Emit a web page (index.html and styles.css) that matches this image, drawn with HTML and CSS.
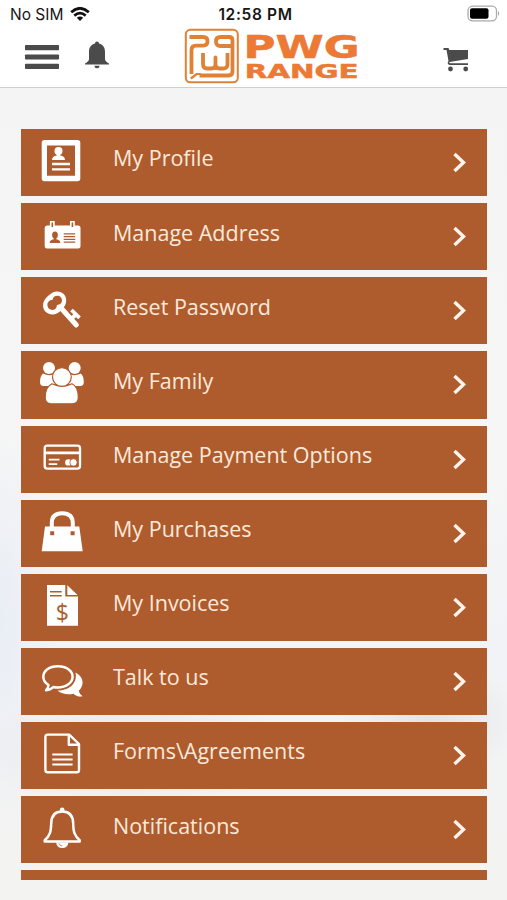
FILE: index.html
```html
<!DOCTYPE html>
<html lang="en">
<head>
<meta charset="utf-8">
<title>PWG Range</title>
<link rel="stylesheet" href="styles.css">
</head>
<body>
<header class="header">
  <div class="status">
    <div class="carrier"><span>No SIM</span>
      <svg width="20" height="14" viewBox="0 0 20 14" fill="none" stroke="#111" stroke-width="2.7"><path d="M1.2 5.3Q10-2.7 18.8 5.3M4.3 8.6Q10 3.8 15.7 8.6"/><path d="M6.8 10.8Q10 8.1 13.2 10.8L10 14Z" fill="#111" stroke="none"/></svg>
    </div>
    <div class="clock">12:58 PM</div>
    <svg class="battery" width="34" height="18" viewBox="0 0 34 18"><rect x="1" y="1.2" width="28.5" height="14.6" rx="4.5" fill="none" stroke="#aaa" stroke-width="1.3"/><rect x="3" y="3.3" width="18.5" height="10.4" rx="2" fill="#000"/><path d="M31 6q2.5 2.5 0 5z" fill="#aaa"/></svg>
  </div>
  <div class="toolbar">
    <div class="tools">
      <svg width="36" height="28" viewBox="0 0 36 28" fill="#4b4b4b"><rect x="1" y="1" width="34" height="5.2" rx=".8"/><rect x="1" y="10.5" width="34" height="5" rx=".8"/><rect x="1" y="19.8" width="34" height="5.2" rx=".8"/></svg>
      <svg width="26" height="28" viewBox="0 0 26 28" fill="#4b4b4b"><path d="M13 .5a2 2 0 0 1 2 2C19.500 3.700 21 7 21 11v7q0 2.300 4 4.500v1H1v-1Q5 20.300 5 18v-7C5 7 6.500 3.700 11 2.500a2 2 0 0 1 2-2z"/><path d="M10.500 24.800h5a2.500 2.500 0 0 1-5 0z"/></svg>
    </div>
    <svg class="logo" width="176" height="57" viewBox="184 28 176 57">
      <g fill="none" stroke="#df8238" stroke-linejoin="round">
        <rect x="185.800" y="29.800" width="52" height="52.500" rx="4.500" stroke-width="2"/>
        <path stroke-width="3.800" d="M189.500 37h13.500q4.500 0 4.500 4.300t-4.500 4.300h-7q-4.500 0-4.500 4.500V74M232.500 46h-12q-4.500 0-4.500-4.500t4.500-4.500h8.500q3.500 0 3.500 3.500v31q0 4-4 4h-29"/>
        <path stroke-width="3.800" d="M203 53v11q0 4.500 4 4.500h4.500q4 0 4-4v-7v7q0 4 4 4h3.500q4.500 0 4.500-4.500v-11"/>
        <path stroke-width="2.200" d="M190.800 78.500l6-4.500h4"/>
      </g>
      <g class="wordmark"><text class="word-top" x="243.500" y="57.600" textLength="116" lengthAdjust="spacingAndGlyphs">PWG</text><text class="word-bottom" x="244.700" y="77.600" textLength="114" lengthAdjust="spacingAndGlyphs">RANGE</text></g>
    </svg>
    <svg class="cart" width="28" height="26" viewBox="443 47 28 26"><path fill="#4b4b4b" d="M443.500 48h5l.8 2H468v9l-18.500 3q-.8 1 .5 1.300h18v1.700h-18.500q-3-1.200-1-4l-2-11h-3z"/><circle cx="450.500" cy="69" r="2.400" fill="#4b4b4b"/><circle cx="465.700" cy="69" r="2.400" fill="#4b4b4b"/></svg>
  </div>
</header>
<main class="menu">
  <a class="row"><svg class="icon" viewBox="38 0 48 67"><path fill-rule="evenodd" d="M44.500 11h33q2.800 0 2.800 2.800v35.700q0 2.800-2.800 2.800h-33q-2.800 0-2.800-2.800V13.800q0-2.800 2.800-2.800zM47 16.400v30.300h28V16.400z"/><circle cx="58.500" cy="22" r="4"/><path d="M56.700 24h3.600v2.500q4.700.5 4.700 4.500H52q0-4 4.700-4.500zM52 33.800h18v2.400H52zM52 39.200h18v2.400H52z"/></svg><span class="label">My Profile</span><svg class="chevron" viewBox="0 0 16 22"><path d="M3.500 3l9 8.500-9 8.500"/></svg></a>
  <a class="row"><svg class="icon" viewBox="38 0 48 67"><rect x="44.700" y="22.500" width="35.800" height="23" rx="2.500"/><path fill="#ae5c2e" stroke="#fff" stroke-width="1.600" d="M50.700 18.800h3.200v6h-3.200zM70.800 18.800H74v6h-3.200z"/><g fill="#ae5c2e"><ellipse cx="55" cy="32" rx="2.900" ry="3.500"/><path d="M53.700 34h2.600v2.200q4 .5 4 3.800H49.700q0-3.300 4-3.800zM63.700 30.200h11.500v1.200H63.700zM63.700 33h11.500v1.200H63.700zM63.700 35.800h11.500V37H63.700zM63.700 38.600h11.500v1.200H63.700z"/></g></svg><span class="label">Manage Address</span><svg class="chevron" viewBox="0 0 16 22"><path d="M3.500 3l9 8.500-9 8.500"/></svg></a>
  <a class="row"><svg class="icon" viewBox="38 0 48 67"><path fill-rule="evenodd" d="M57 14.500c6 0 9.500 4.300 9.200 9.500-.2 3.500-1.500 5.500-3.500 7.800-3 3.500-6 5.700-10 5.600-5.500 0-9.500-3.500-9.700-9 0-4 2-7 5-9.500s5.500-4.400 9-4.400zm.2 4.200c-2.500 0-4.200 1.600-4.600 4-3.200.4-5.400 2.300-5.200 5.500.2 2.800 2.500 4.800 5.200 4.700 2.700-.2 4.300-2 4.300-4.900 2.900.1 5-1.700 5.100-4.400.1-2.800-2-4.900-4.800-4.900z"/><path fill="none" stroke="#fff" stroke-width="5" stroke-linecap="round" d="M61 31l15.300 17"/><path fill="none" stroke="#fff" stroke-width="3.800" d="M70.500 42.500l5.500-5M71.500 33l8 7.800"/></svg><span class="label">Reset Password</span><svg class="chevron" viewBox="0 0 16 22"><path d="M3.500 3l9 8.500-9 8.500"/></svg></a>
  <a class="row"><svg class="icon" viewBox="38 0 48 67"><circle cx="49" cy="16.900" r="6"/><circle cx="74.700" cy="16.900" r="6"/><path d="M43 22.500q6 3 10 1 0 6 3.500 9l-5 2.500h-8q-3.500 0-3.500-4 0-6 3-8.500zM80.800 22.500q-6 3-10 1 0 6-3.500 9l5 2.500h8q3.500 0 3.500-4 0-6-3-8.500z"/><g stroke="#ae5c2e" stroke-width="1.200"><path d="M52 32.800q10 5 20 0 6.200 3 6.300 13.500 0 6.500-6 6.500H51.200q-6 0-6-6.500Q45.400 35.800 52 32.800z"/><circle cx="61.900" cy="26" r="9.400"/></g></svg><span class="label">My Family</span><svg class="chevron" viewBox="0 0 16 22"><path d="M3.500 3l9 8.500-9 8.500"/></svg></a>
  <a class="row"><svg class="icon" viewBox="38 0 48 67"><rect x="44.700" y="19.700" width="35.300" height="23" rx="2.600" fill="none" stroke="#fff" stroke-width="2.300"/><path d="M45 25.500h35v2.800H45zM48.700 32.700h10.800v1.800H48.700zM48.700 37.300h8.500v1.800h-8.500z"/><circle cx="68.300" cy="36.400" r="3.200"/><circle cx="73.500" cy="36.400" r="3.700" stroke="#ae5c2e" stroke-width=".8"/></svg><span class="label">Manage Payment Options</span><svg class="chevron" viewBox="0 0 16 22"><path d="M3.500 3l9 8.500-9 8.500"/></svg></a>
  <a class="row"><svg class="icon" viewBox="38 0 48 67"><path d="M45 26.500h34.300l3.400 24.700h-41z"/><path fill="none" stroke="#fff" stroke-width="4" d="M51.800 28v-5q0-9.800 10.400-9.800T72.800 23v5"/><path fill="#ae5c2e" d="M50.200 31.200h4v4h-4zM70.600 31.200h4v4h-4z"/></svg><span class="label">My Purchases</span><svg class="chevron" viewBox="0 0 16 22"><path d="M3.500 3l9 8.500-9 8.500"/></svg></a>
  <a class="row"><svg class="icon" viewBox="38 0 48 67"><path d="M47 11.100h18.300v11.300H78v29.400H47z"/><path d="M67.300 11.300L77.500 21H67.300z"/><path fill="#ae5c2e" d="M50 17h11.700v1.600H50zM50 21h11.700v1.600H50z"/><text class="dollar" x="62.300" y="47">$</text></svg><span class="label">My Invoices</span><svg class="chevron" viewBox="0 0 16 22"><path d="M3.500 3l9 8.500-9 8.500"/></svg></a>
  <a class="row"><svg class="icon" viewBox="38 0 48 67"><path d="M75.500 24.500c8 4 9.500 12.500 3.300 18.200.5 2.600 2 4 3.700 5.500-3.500 1-6.500-.3-9-2.500-6 1.300-12 .3-16-3.200 10 .3 20.500-6 18-18z"/><path fill="#ae5c2e" stroke="#fff" stroke-width="2.500" stroke-linejoin="round" d="M57.800 18.300c8.500 0 14.800 4.600 14.800 10.500S66.300 39.500 57.800 39.500q-2.300 0-4.500-.5-3 3.100-7.300 3.300 2.400-2.300 2.500-5.300-5.200-3.200-5.200-8.200c0-5.900 6-10.500 14.500-10.500z"/></svg><span class="label">Talk to us</span><svg class="chevron" viewBox="0 0 16 22"><path d="M3.500 3l9 8.500-9 8.500"/></svg></a>
  <a class="row"><svg class="icon" viewBox="38 0 48 67"><path fill="none" stroke="#fff" stroke-width="2.400" stroke-linejoin="round" d="M47.700 12.600h21.500L79 22v26q0 2.300-2.300 2.300h-29q-2.300 0-2.300-2.300V14.900q0-2.300 2.300-2.300zM68.800 12.800v10H79"/><path d="M52.300 31.400h20.300v2.200H52.300zM52.300 36.400h20.300v2.200H52.300zM52.300 41.400h20.300v2.200H52.300z"/></svg><span class="label">Forms\Agreements</span><svg class="chevron" viewBox="0 0 16 22"><path d="M3.500 3l9 8.500-9 8.500"/></svg></a>
  <a class="row"><svg class="icon" viewBox="38 0 48 67"><path fill="none" stroke="#fff" stroke-width="2.500" stroke-linejoin="round" d="M62.200 15.400c7.500 0 10.900 5 11 12 .2 8.500 1.300 12.500 6.500 16.800v1.200H44.700v-1.200c5.200-4.300 6.300-8.300 6.500-16.800.1-7 3.500-12 11-12z"/><circle cx="62.200" cy="13.800" r="2.300"/><path d="M56 46.500h12.500q-1 5.500-6.200 5.500T56 46.500z"/><path fill="none" stroke="#ae5c2e" stroke-width=".7" d="M59 47.500q.8 2.500 3.300 2.600"/></svg><span class="label">Notifications</span><svg class="chevron" viewBox="0 0 16 22"><path d="M3.500 3l9 8.500-9 8.500"/></svg></a>
  <div class="row partial"></div>
</main>
</body>
</html>
```
FILE: styles.css
```css
* { box-sizing: border-box; }
body {
  margin: 0;
  height: 900px;
  overflow: hidden;
  font-family: "Open Sans", sans-serif;
  background:
    radial-gradient(ellipse 60px 200px at 0 620px, #e9eef5, transparent),
    radial-gradient(ellipse 90px 60px at 430px 720px, #e4e4e6, transparent),
    radial-gradient(ellipse 160px 60px at 130px 750px, #e6e6e8, transparent),
    linear-gradient(#f4f4f4, #f6f6f6 50%, #f2f3f6 72%, #f3f3f1);
}
.header { height: 88px; background: #fff; border-bottom: 1px solid #cfcfcf; }
.status {
  display: grid;
  grid-template-columns: 1fr auto 1fr;
  height: 28px;
  padding: 5px 6px 0 10px;
  font-family: Inter, sans-serif;
  font-size: 15.500px;
  line-height: 20px;
  color: #161616;
}
.carrier { display: flex; gap: 7px; }
.carrier svg { margin-top: 2px; }
.clock { font-weight: 600; letter-spacing: .65px; }
.battery { justify-self: end; }
.toolbar { display: grid; grid-template-columns: 184px 176px 1fr; height: 57px; }
.tools { display: flex; gap: 24px; padding: 16px 0 0 24px; }
.tools svg:last-child { margin-top: -3px; }
.cart { margin: 19px 0 0 83px; }
.wordmark { font-family: "DejaVu Sans", sans-serif; font-weight: bold; fill: #ec7a35; stroke: #ec7a35; stroke-width: .5px; }
.word-top { font-size: 32.500px; }
.word-bottom { font-size: 19.500px; }
.menu { display: flex; flex-direction: column; gap: 6.950px; padding: 41px 20px 0 21px; }
.row {
  display: flex;
  flex: none;
  align-items: flex-start;
  height: 67.200px;
  padding: 0 20px 0 17px;
  background: #ae5c2e;
  color: #fde9db;
}
.icon { width: 48px; height: 67px; fill: #fff; flex: none; }
.label { flex: 1; margin-left: 27px; padding-top: 14.400px; font-size: 21.500px; line-height: 30px; white-space: nowrap; }
.chevron { width: 16px; height: 22px; margin-top: 22px; fill: none; stroke: #fff4ec; stroke-width: 3.400px; }
.dollar { font: 500 23px "Open Sans", sans-serif; text-anchor: middle; fill: #ae5c2e; }
.partial { height: 10px; }
```
